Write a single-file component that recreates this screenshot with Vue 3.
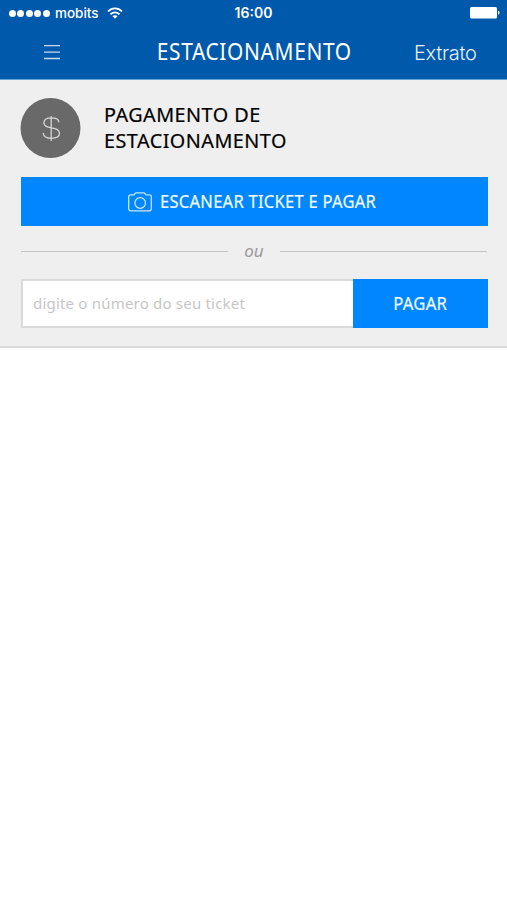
<script setup>
import { ref } from 'vue'
const ticket = ref('')
</script>

<template>
  <div class="screen">
    <header class="top">
      <div class="status">
        <div class="carrier">
          <span class="dots"><i v-for="n in 5" :key="n"></i></span>
          <span class="network">mobits</span>
          <svg class="wifi" width="16" height="12" viewBox="0 0 16 12" fill="none" stroke="#fff" stroke-width="1.8">
            <path d="M1 4.5C5 .3 11 .3 15 4.5M3.5 7.3c2.6-2.6 6.4-2.6 9 0" />
            <path d="M5.4 9.1c1.5-1.3 3.7-1.3 5.2 0L8 11.8z" fill="#fff" stroke="none" />
          </svg>
        </div>
        <span class="time">16:00</span>
        <svg class="battery" width="30" height="12" viewBox="0 0 30 12" fill="#fff">
          <rect width="27" height="11.4" rx="1.5" />
          <path d="M28 3.8c2 .6 2 3.4 0 4z" />
        </svg>
      </div>
      <nav class="nav">
        <svg class="menu" width="16" height="16" viewBox="0 0 16 16" stroke="#c5dcf2" stroke-width="1.3">
          <path d="M0 1.7h16M0 8.2h16M0 14.5h16" />
        </svg>
        <h1><span>ESTACIONAMENTO</span></h1>
        <a class="statement">Extrato</a>
      </nav>
    </header>
    <main class="panel">
      <div class="intro">
        <svg class="coin" width="61" height="60" viewBox="0 0 61 60" fill="none">
          <circle cx="30.5" cy="30" r="30" fill="#696969" />
          <path d="M38.8 24.2c0-2.8-3.2-4.4-7.4-4.4-4.4 0-7.5 1.9-7.5 5.1 0 7.2 15.6 2.5 15.6 10.4 0 3.2-3.4 5-8.1 5-4.8 0-8.1-2-8.1-5.3M31.2 18v25" stroke="#d5d5d5" stroke-width="1.3" />
        </svg>
        <h2><span>PAGAMENTO DE</span><br /><span>ESTACIONAMENTO</span></h2>
      </div>
      <button class="scan">
        <svg width="24" height="20" viewBox="0 0 24 20" fill="none" stroke="#c5e7ff" stroke-width="1.3">
          <path d="M2.7 2.8H6L7.8.9h8.4L18 2.8h3.3c1.2 0 2 .8 2 2v12c0 1.2-.8 2-2 2H2.7c-1.2 0-2-.8-2-2v-12c0-1.2.8-2 2-2z" />
          <circle cx="12.2" cy="11" r="5.3" />
        </svg>
        <span>ESCANEAR TICKET E PAGAR</span>
      </button>
      <div class="divider"><span>ou</span></div>
      <form class="entry" @submit.prevent>
        <input v-model="ticket" placeholder="digite o número do seu ticket" />
        <button class="pay"><span>PAGAR</span></button>
      </form>
    </main>
  </div>
</template>

<style>
body { margin: 0; background: #fff; }
</style>

<style scoped>
* { box-sizing: border-box; }
.screen { width: 507px; height: 900px; overflow: hidden; background: #fff; font-family: "Noto Sans", sans-serif; }
.top { height: 80px; background: #0059ab; border-bottom: 1px solid #66a5dc; color: #fff; }
.status { height: 26px; display: grid; grid-template-columns: 1fr auto 1fr; align-items: center; padding: 0 7px 0 9px; font: 500 14px/26px Inter, sans-serif; }
.carrier { display: flex; align-items: center; height: 26px; }
.dots { display: flex; gap: 1.4px; margin-right: 5.4px; }
.dots i { width: 7px; height: 7px; border-radius: 50%; background: #fff; }
.network { font-size: 13.5px; margin-right: 8px; }
.time { font-weight: 600; margin-right: 2px; line-height: 26px; }
.battery { justify-self: end; }
.nav { height: 52px; display: grid; grid-template-columns: 104px 1fr 123px; align-items: center; }
.menu { justify-self: center; }
h1, h2 { margin: 0; font-weight: 400; }
h1 { font-size: 23px; line-height: 50px; text-align: center; padding: 0 0 2px 20px; }
h1 span, h2 span, .scan span, .pay span { display: inline-block; white-space: nowrap; }
h1 span { transform: scaleX(.909); letter-spacing: .7px; }
.statement { font: 300 20px/50px Inter, sans-serif; color: #e3effa; letter-spacing: -.3px; padding: 2px 0 0 30px; }
.panel { height: 268px; padding: 18px 20px 0; background: #efefef; border-bottom: 2px solid #dadada; }
.intro { display: flex; height: 60px; }
h2 { margin-left: 23px; padding-top: 3px; font-size: 20.5px; line-height: 26px; color: #000; -webkit-text-stroke: .2px #000; }
h2 span { transform-origin: left; transform: scaleX(.965); letter-spacing: .5px; }
button { border: 0; padding: 0; background: #0087ff; color: #f0f9ff; font: 400 18px/24px "Noto Sans", sans-serif; -webkit-text-stroke: .2px #f0f9ff; }
.scan { display: flex; align-items: center; width: 467px; height: 49px; margin: 19px 0 0 1px; padding-left: 107px; white-space: nowrap; }
.scan svg { flex: none; margin-right: 8px; }
.scan span { transform-origin: left; transform: scaleX(.917); letter-spacing: .3px; padding-bottom: 2px; }
.divider { display: flex; align-items: center; height: 50px; margin-left: 1px; color: #999; font: italic 17px/24px "Noto Sans", sans-serif; }
.divider::before, .divider::after { content: ""; height: 1px; flex: 1; background: #c3c3c3; }
.divider span { width: 52px; text-align: center; }
.entry { display: flex; width: 467px; height: 49px; margin: 3px 0 0 1px; }
.entry input { width: 332px; border: 2px solid #dadada; border-right: 0; border-radius: 0; padding: 0 10px 1px; background: #fff; outline: 0; font: 15px "Noto Sans", sans-serif; letter-spacing: .2px; }
.entry input::placeholder { color: #c6c6c6; opacity: 1; }
.pay { width: 135px; }
.pay span { transform: scaleX(.925); letter-spacing: .3px; padding-bottom: 1px; }
</style>
